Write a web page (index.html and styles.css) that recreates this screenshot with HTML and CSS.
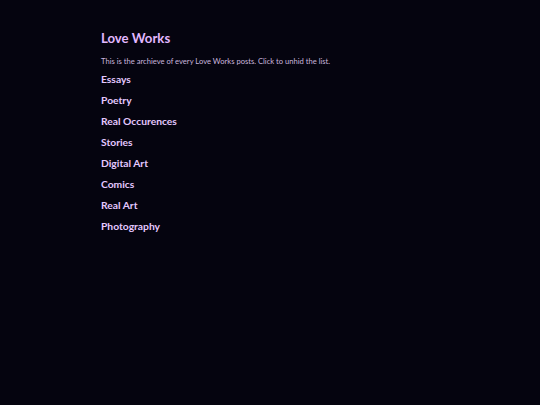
FILE: index.html
```html
<!DOCTYPE html>
<html>
<head>
<meta charset="utf-8">
<link rel="stylesheet" href="styles.css">
</head>
<body>
<main class="page">
  <h1 class="title">Love Works</h1>
  <p class="desc">This is the archieve of every Love Works posts. Click to unhid the list.</p>
  <ul class="list">
    <li>Essays</li>
    <li>Poetry</li>
    <li>Real Occurences</li>
    <li>Stories</li>
    <li>Digital Art</li>
    <li>Comics</li>
    <li>Real Art</li>
    <li>Photography</li>
  </ul>
</main>
</body>
</html>
```
FILE: styles.css
```css
html, body {
  margin: 0;
  padding: 0;
  background: #05040f;
  height: 100%;
}
body {
  font-family: "Lato", "DejaVu Sans", sans-serif;
}
.page {
  padding: 30px 0 0 101px;
}
.title {
  margin: 0;
  font-size: 13.2px;
  font-weight: 700;
  color: #e2b8ff;
  line-height: 16px;
}
.desc {
  margin: 10px 0 0;
  font-size: 7.6px;
  line-height: 10px;
  color: #c9b5dd;
}
.list {
  list-style: none;
  margin: 6px 0 0;
  padding: 0;
  display: flex;
  flex-direction: column;
  gap: 7px;
}
.list li {
  font-size: 10.3px;
  font-weight: 700;
  line-height: 14px;
  color: #e4c8ff;
}
```
